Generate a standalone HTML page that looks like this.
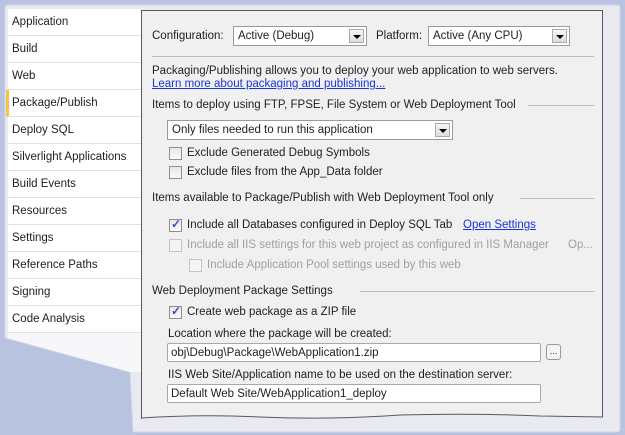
<!DOCTYPE html>
<html><head><meta charset="utf-8"><style>
*{margin:0;padding:0;box-sizing:border-box}
body{width:625px;height:435px;overflow:hidden;background:#b7c3df;font-family:"Liberation Sans",sans-serif;font-size:11.5px;color:#1e1e1e;position:relative}
.a{position:absolute;white-space:nowrap}
.t{padding-top:1px}
.tab{position:absolute;left:8px;width:133px;height:27px;background:#fff;border-bottom:1px solid #dfe1e8;padding-left:4px;line-height:27px}
.sel{border-left:3px solid #f5c242;left:6px;width:135px;padding-left:3px}
#panel{position:absolute;left:141px;top:10px;width:462px;height:409px;background:#f0f0f0;border:1px solid #5a5a5a;border-bottom:none}
.cb{position:absolute;width:13px;height:13px;border:1px solid #8f8f8f;background:linear-gradient(#e6e6e6,#fafafa)}
.cb.d{border-color:#c4c4c4;background:#f4f4f4}
.dd{position:absolute;height:20px;background:#fff;border:1px solid #9a9a9a;padding-left:4px;line-height:19px}
.btn{position:absolute;right:2px;top:2px;width:15px;height:14px;border:1px solid #aaa;background:linear-gradient(#f6f6f6,#dcdcdc)}
.btn:after{content:"";position:absolute;left:3px;top:5px;border-left:4px solid transparent;border-right:4px solid transparent;border-top:4px solid #000}
.tb{position:absolute;height:19px;background:#fff;border:1px solid #a8a8a8;border-radius:2px;padding-left:3px;line-height:18px}
.hr{position:absolute;height:1px;background:#bdbdbd}
.g{color:#a0a0a0}
.chk:after{content:"✓";position:absolute;left:1px;top:-3px;font-size:12px;color:#3556b8;font-weight:bold}
</style></head><body>
<svg class="a" style="left:0;top:0" width="625" height="435">
<path d="M5,8 Q5,5 8,5 L617,5 Q620,5 620,8 L620,429 Q620,432 617,432 L133,432 L130,372 L5,338 Z" fill="#e9eaf1" stroke="#d3d7e4"/>
<path d="M8,333 L141,333 L141,372 L130,372 L8,338 Z" fill="#f7f7fa"/>
</svg>
<div class="tab" style="top:9px">Application</div>
<div class="tab" style="top:36px">Build</div>
<div class="tab" style="top:63px">Web</div>
<div class="tab sel" style="top:90px">Package/Publish</div>
<div class="tab" style="top:117px">Deploy SQL</div>
<div class="tab" style="top:144px">Silverlight Applications</div>
<div class="tab" style="top:171px">Build Events</div>
<div class="tab" style="top:198px">Resources</div>
<div class="tab" style="top:225px">Settings</div>
<div class="tab" style="top:252px">Reference Paths</div>
<div class="tab" style="top:279px">Signing</div>
<div class="tab" style="top:306px">Code Analysis</div>
<div id="panel"></div>
<svg class="a" style="left:0;top:0" width="625" height="435">
<path d="M141,419 Q200,414 260,417 Q330,420 400,415 Q470,413 540,416 L603,417 L603,424 L141,424 Z" fill="#e9eaf1"/>
<path d="M141,418 Q200,414 260,417 Q330,420 400,415 Q470,413 540,416 L603,417" fill="none" stroke="#5a5a5a"/>
</svg>
<div class="a t" style="left:152px;top:29px">Configuration:</div>
<div class="dd" style="left:233px;top:26px;width:134px">Active (Debug)<div class="btn"></div></div>
<div class="a t" style="left:376px;top:29px">Platform:</div>
<div class="dd" style="left:428px;top:26px;width:142px">Active (Any CPU)<div class="btn"></div></div>
<div class="hr" style="left:152px;top:56px;width:442px"></div>
<div class="a t" style="left:152px;top:64px">Packaging/Publishing allows you to deploy your web application to web servers.</div>
<div class="a t" style="left:152px;top:77px;color:#1a33d8;text-decoration:underline">Learn more about packaging and publishing...</div>
<div class="a t" style="left:152px;top:98px">Items to deploy using FTP, FPSE, File System or Web Deployment Tool</div>
<div class="hr" style="left:528px;top:105px;width:66px"></div>
<div class="dd" style="left:167px;top:120px;width:286px">Only files needed to run this application<div class="btn"></div></div>
<div class="cb" style="left:169px;top:147px"></div><div class="a t" style="left:187px;top:146px">Exclude Generated Debug Symbols</div>
<div class="cb" style="left:169px;top:166px"></div><div class="a t" style="left:187px;top:165px">Exclude files from the App_Data folder</div>
<div class="a t" style="left:152px;top:191px">Items available to Package/Publish with Web Deployment Tool only</div>
<div class="hr" style="left:520px;top:198px;width:74px"></div>
<div class="cb chk" style="left:169px;top:219px"></div><div class="a t" style="left:187px;top:218px">Include all Databases configured in Deploy SQL Tab</div>
<div class="a t" style="left:463px;top:218px;color:#1a33d8;text-decoration:underline">Open Settings</div>
<div class="cb d" style="left:169px;top:239px"></div><div class="a t g" style="left:187px;top:238px">Include all IIS settings for this web project as configured in IIS Manager</div>
<div class="a t g" style="left:568px;top:238px">Op...</div>
<div class="cb d" style="left:189px;top:259px"></div><div class="a t g" style="left:207px;top:258px">Include Application Pool settings used by this web</div>
<div class="a t" style="left:152px;top:284px">Web Deployment Package Settings</div>
<div class="hr" style="left:360px;top:291px;width:234px"></div>
<div class="cb chk" style="left:169px;top:306px"></div><div class="a t" style="left:187px;top:305px">Create web package as a ZIP file</div>
<div class="a t" style="left:168px;top:327px">Location where the package will be created:</div>
<div class="tb" style="left:167px;top:343px;width:374px">obj\Debug\Package\WebApplication1.zip</div>
<div class="a" style="left:546px;top:344px;width:15px;height:16px;border:1px solid #999;border-radius:3px;background:#f4f4f4;font-size:9px;text-align:center;line-height:12px">...</div>
<div class="a t" style="left:168px;top:368px">IIS Web Site/Application name to be used on the destination server:</div>
<div class="tb" style="left:167px;top:384px;width:374px">Default Web Site/WebApplication1_deploy</div>
</body></html>
